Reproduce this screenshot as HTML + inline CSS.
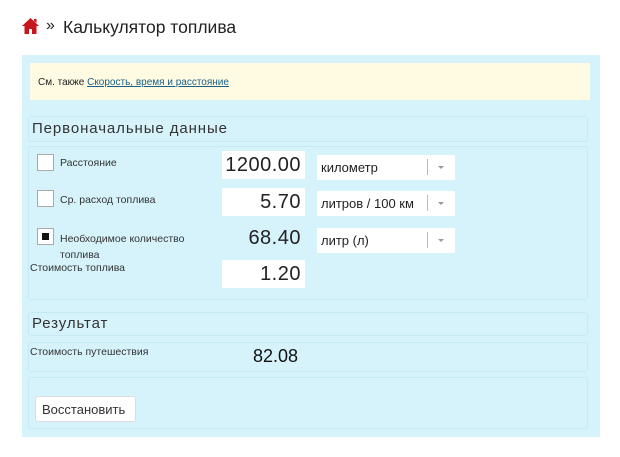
<!DOCTYPE html>
<html><head><meta charset="utf-8"><style>
*{box-sizing:border-box;margin:0;padding:0}
body{width:620px;height:457px;background:#fff;font-family:"Liberation Sans","DejaVu Sans",sans-serif;color:#222;position:relative;overflow:hidden}
.a{position:absolute}
.title{left:63px;top:17px;font-size:17.5px;color:#222}
.panel{left:22px;top:55px;width:578px;height:382px;background:#d6f3fc}
.note{left:30px;top:63px;width:560px;height:37px;background:#fffbe3;font-size:10px;padding:14px 0 0 8px}
.note a{color:#1a5f88;text-decoration:underline}
.h{font-size:15px;color:#333;letter-spacing:.9px}
.box{border:1px solid #c6eaf5;border-radius:3px}
.cb{width:17px;height:17px;background:#fff;border:1px solid #aaa}
.lab{font-size:10.5px;color:#333}
.inp{background:#fff;width:83px;height:28px;text-align:right;font-size:20px;padding:3px 4px 0 0;color:#222;letter-spacing:.5px}
.sel{background:#fff;width:138px;height:25px;font-size:13px;padding:5px 0 0 4px;color:#222}
.sel:after{content:"";position:absolute;left:110px;top:4px;width:1px;height:16px;background:#bbb}
.sel i{position:absolute;left:121px;top:11px;border:3px solid transparent;border-top:3px solid #999}
</style></head><body>
<svg class="a" style="left:22px;top:18px" width="17" height="16" viewBox="0 0 17 16"><path d="M8.5 0L0 8h2.5v8h4.5v-5h3v5h4.5V8H17z M12 1h2.5v4L12 3z" fill="#c8161d"/></svg>
<div class="a" style="left:46px;top:17px;font-size:16px">»</div>
<div class="a title">Калькулятор топлива</div>
<div class="a panel"></div>
<div class="a note">См. также <a>Скорость, время и расстояние</a></div>
<div class="a box" style="left:28px;top:116px;width:560px;height:26px"></div>
<div class="a h" style="left:32px;top:120px">Первоначальные данные</div>
<div class="a box" style="left:28px;top:146px;width:560px;height:154px"></div>
<div class="a cb" style="left:37px;top:154px"></div>
<div class="a lab" style="left:60px;top:157px">Расстояние</div>
<div class="a inp" style="left:222px;top:151px">1200.00</div>
<div class="a sel" style="left:317px;top:155px">километр<i></i></div>
<div class="a cb" style="left:37px;top:190px"></div>
<div class="a lab" style="left:60px;top:194px">Ср. расход топлива</div>
<div class="a inp" style="left:222px;top:188px">5.70</div>
<div class="a sel" style="left:317px;top:191px">литров / 100 км<i></i></div>
<div class="a cb" style="left:37px;top:228px"><div style="width:7px;height:7px;background:#111;margin:4px"></div></div>
<div class="a lab" style="left:60px;top:231px;line-height:16px">Необходимое количество<br>топлива</div>
<div class="a inp" style="left:222px;top:224px;background:transparent">68.40</div>
<div class="a sel" style="left:317px;top:228px">литр (л)<i></i></div>
<div class="a lab" style="left:30px;top:262px">Стоимость топлива</div>
<div class="a inp" style="left:222px;top:260px">1.20</div>
<div class="a box" style="left:28px;top:312px;width:560px;height:24px"></div>
<div class="a h" style="left:32px;top:315px">Результат</div>
<div class="a box" style="left:28px;top:342px;width:560px;height:30px"></div>
<div class="a lab" style="left:30px;top:346px">Стоимость путешествия</div>
<div class="a" style="left:253px;top:346px;font-size:18px;color:#111">82.08</div>
<div class="a box" style="left:28px;top:377px;width:560px;height:52px"></div>
<div class="a" style="left:35px;top:396px;width:101px;height:26px;background:#fff;border:1px solid #ddd;border-radius:3px;font-size:13px;padding:5px 0 0 6px;color:#333">Восстановить</div>
</body></html>
